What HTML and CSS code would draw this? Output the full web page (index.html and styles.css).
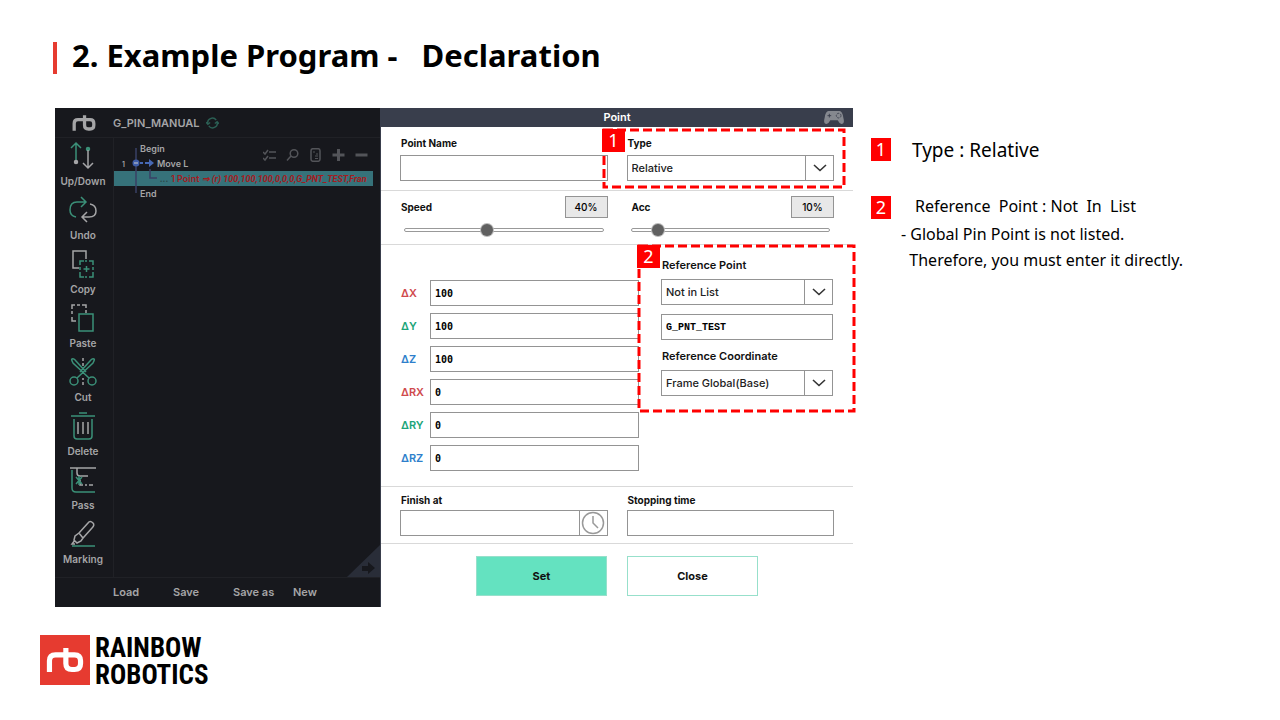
FILE: index.html
```html
<!DOCTYPE html>
<html lang="en">
<head>
<meta charset="utf-8">
<title>Example Program - Declaration</title>
<link rel="stylesheet" href="styles.css">
</head>
<body>
<svg class="defs" aria-hidden="true">
  <symbol id="rb" viewBox="0 0 44 32"><path d="M4 30V17Q4 10 11 10H33Q40 10 40 17V20Q40 27 33 27H30Q23 27 23 20V2" fill="none" stroke="currentColor" stroke-width="6"/></symbol>
  <symbol id="chev" viewBox="0 0 14 8"><path d="M1 1L7 6.500L13 1" fill="none" stroke="#333" stroke-width="1.600"/></symbol>
</svg>
<header class="title"><h1>2. Example Program -&nbsp;&nbsp; Declaration</h1></header>
<main class="content">
  <div class="app">
    <section class="editor">
      <div class="topbar">
        <svg class="brand"><use href="#rb"/></svg>
        <span class="file">G_PIN_MANUAL</span>
        <svg class="sync" viewBox="0 0 14 12"><path d="M2 7A5 5 0 0 1 11 3M12 5A5 5 0 0 1 3 9M0 5L2 7.500L4.500 5.500M9.500 6.500L12 4.500L14 7" /></svg>
      </div>
      <nav class="side">
        <button class="tool"><svg viewBox="0 0 30 30"><g class="g"><path d="M8 20V2M3 7L8 2L13 7"/><circle cx="20" cy="8" r="1.500" fill="#3b9078"/></g><g class="w"><path d="M20 9V27M15 22L20 27L25 22"/><circle cx="8" cy="21" r="1.500" fill="#a5a5a7"/></g></svg>Up/Down</button>
        <button class="tool"><svg viewBox="0 0 30 30"><path class="g" d="M8 22Q2 21 2 15Q2 7 9 7H18M13 2L18 7L13 12"/><path class="w" d="M22 9Q28 10 28 16Q28 22 21 22H14M19 17L14 22L19 27"/></svg>Undo</button>
        <button class="tool"><svg viewBox="0 0 30 30"><path class="w" d="M11 19H5V2H18V10"/><path class="g" d="M12 16V12H16M21 12H25V16M25 23V28H21M16 28H12V23M12 18V21M25 18V21M17 12H19M17 28H19M15.500 20H21.500M18.500 17V23"/></svg>Copy</button>
        <button class="tool"><svg viewBox="0 0 30 30"><path class="w" d="M4 6V2H7M9 2H12M14 2H18V5M4 8V11M4 14V18H8M18 7V10"/><path class="g" d="M11 11H25V28H11Z"/></svg>Paste</button>
        <button class="tool"><svg viewBox="0 0 30 30"><path class="w" d="M15 1V4M15 6V9M15 21V23M15 25V28"/><g class="g"><circle cx="6" cy="24" r="4"/><circle cx="24" cy="24" r="4"/><path d="M9 21L25 6Q27 2 26 2Q24 1 22 4L12 15M21 21L5 6Q3 2 4 2Q6 1 8 4L18 15"/></g></svg>Cut</button>
        <button class="tool"><svg viewBox="0 0 30 30"><path class="g" d="M11 2H19M3 5H27M6 8V25Q6 28 9 28H21Q24 28 24 25V8"/><path class="w" d="M10 11V23M15 11V23M20 11V23"/></svg>Delete</button>
        <button class="tool"><svg viewBox="0 0 30 30"><path class="w" d="M2 3H28M9 3V8Q9 11 12 11H20M12 15V20H15M17 20H19M21 20H25"/><path class="g" d="M4 5V23Q4 27 8 27H27M8 12L14 19M14 12L8 19M11 11V20"/></svg>Pass</button>
        <button class="tool"><svg viewBox="0 0 30 30"><path class="w" d="M11 14L20 4Q22 1 25 4Q27 6 24 9L15 19ZM11 14L7 17L6 21L9 24L13 22L15 19M7 21L4 25H7"/><path class="g" d="M4 27H27"/></svg>Marking</button>
      </nav>
      <div class="tree">
        <div class="treetools">
          <svg viewBox="0 0 13 12"><path d="M0 3L2 5L5 1M6 3H13M0 9L2 11L5 7M6 9H13"/></svg>
          <svg viewBox="0 0 13 12"><circle cx="8" cy="4.500" r="3.800"/><path d="M5 7L1 11.500"/></svg>
          <svg viewBox="0 0 13 14"><rect x="2" y="0.700" width="9" height="12.600" rx="2"/><path d="M4 4H6M7 6H9M6 8H9M6 10.500H9" stroke-width="1"/></svg>
          <svg viewBox="0 0 13 12" class="bold"><path d="M0.500 6H12.500M6.500 0V12"/></svg>
          <svg viewBox="0 0 13 12" class="bold"><path d="M0.500 6H12.500"/></svg>
        </div>
        <svg class="guide" viewBox="0 0 46 60"><path d="M22 7V52M36 28V37H43" fill="none" stroke="#3a4066" stroke-width="1.500"/><circle cx="22" cy="22" r="3.500" fill="#3e5da8"/><path d="M20 22H24" stroke="#ccc"/><path d="M26 22H29M31 22H36" stroke="#4769b5" stroke-width="2"/><path d="M35 18L40 22L35 26Z" fill="#4769b5"/></svg>
        <div class="node begin">Begin</div>
        <div class="node move"><span>1</span>Move L</div>
        <div class="node point"><i class="axis">...</i>1 Point <i class="args">⇒ (r) 100,100,100,0,0,0,G_PNT_TEST,Fran</i></div>
        <div class="node begin">End</div>
        <svg class="corner" viewBox="0 0 33 32"><path d="M33 0V32H0Z" fill="#292d38"/><path d="M15 21H21V17L28 23L21 29V26H15Z" fill="#17181d"/></svg>
      </div>
      <div class="files"><button>Load</button><button>Save</button><button>Save as</button><button>New</button></div>
    </section>
    <form class="panel">
      <div class="bar">Point
        <svg class="pad" viewBox="0 0 22 14"><path d="M5 0H17Q20 0 21 7Q23 14 19 14Q17 14 15 10H7Q5 14 3 14Q-1 14 1 7Q2 0 5 0Z" fill="#85888f"/><path d="M4 5H8M6 3V7" stroke="#393e4c"/><circle cx="16" cy="5" r="2.500" fill="none" stroke="#393e4c" stroke-dasharray="2 1"/></svg>
      </div>
      <div class="row names">
        <div class="field"><label for="pn">Point Name</label><input id="pn" type="text"></div>
        <div class="field"><label for="ty">Type</label><div class="pick"><select id="ty"><option>Relative</option></select><span><svg><use href="#chev"/></svg></span></div></div>
      </div>
      <div class="row rates">
        <div class="rate"><label for="sp">Speed</label><output>40%</output><input id="sp" type="range" value="41"></div>
        <div class="rate acc"><label for="ac">Acc</label><output>10%</output><input id="ac" type="range" value="11"></div>
      </div>
      <div class="row coords">
        <div class="axes">
          <label class="x" for="dx">ΔX</label><input id="dx" type="text" value="100">
          <label class="y" for="dy">ΔY</label><input id="dy" type="text" value="100">
          <label class="z" for="dz">ΔZ</label><input id="dz" type="text" value="100">
          <label class="x" for="rx">ΔRX</label><input id="rx" type="text" value="0">
          <label class="y" for="ry">ΔRY</label><input id="ry" type="text" value="0">
          <label class="z" for="rz">ΔRZ</label><input id="rz" type="text" value="0">
        </div>
        <div class="refs">
          <label for="rp">Reference Point</label>
          <div class="pick"><select id="rp"><option>Not in List</option></select><span><svg><use href="#chev"/></svg></span></div>
          <input type="text" class="pin" aria-label="Point" value="G_PNT_TEST">
          <label for="rc">Reference Coordinate</label>
          <div class="pick"><select id="rc"><option>Frame Global(Base)</option></select><span><svg><use href="#chev"/></svg></span></div>
        </div>
      </div>
      <div class="row times">
        <div class="field"><label for="fa">Finish at</label><div class="pick"><input id="fa" type="text"><span><svg class="clock" viewBox="0 0 24 24"><circle cx="12" cy="12" r="10.500"/><path d="M12 5V12L17 17"/></svg></span></div></div>
        <div class="field"><label for="st">Stopping time</label><input id="st" type="text"></div>
      </div>
      <div class="actions"><button type="button" class="set">Set</button><button type="button">Close</button></div>
      <div class="mark one"><svg><rect/></svg><b class="num">1</b></div>
      <div class="mark two"><svg><rect/></svg><b class="num">2</b></div>
    </form>
  </div>
  <aside class="notes">
    <div class="note"><b class="num">1</b><p class="lead">Type : Relative</p></div>
    <div class="note"><b class="num">2</b><p>Reference&nbsp; Point : Not&nbsp; In&nbsp; List</p></div>
    <p class="detail">- Global Pin Point is not listed.<br>&nbsp; Therefore, you must enter it directly.</p>
  </aside>
</main>
<footer class="logo">
  <div class="tile"><svg><use href="#rb"/></svg></div>
  <div class="name"><div>RAINBOW</div><div>ROBOTICS</div></div>
</footer>
</body>
</html>
```
FILE: styles.css
```css
* { box-sizing: border-box; }
body { margin: 0; background: #fff; color: #000; font-family: "Noto Sans", sans-serif; }
button, input, select { font: inherit; color: inherit; margin: 0; }
button { border: 0; background: none; padding: 0; }
p, h1 { margin: 0; }
.defs { position: absolute; width: 0; height: 0; }

.title { padding: 42px 53px 34px; }
.title h1 { border-left: 4px solid #e63b30; padding: 0 0 6px 15px; font-size: 31px; line-height: 26px; font-weight: 700; }

.content { display: grid; grid-template-columns: minmax(0, 798fr) minmax(0, 391fr); gap: 18px; padding: 0 18px 0 55px; }
.app { display: grid; grid-template-columns: 325fr 473fr; font-family: Inter, sans-serif; font-size: 11px; font-weight: 600; }

.editor { display: grid; grid-template: 30px 1fr 30px / 59px minmax(0, 1fr); background: #17181d; color: #a5a5a7; }
.topbar { grid-column: 1 / -1; display: flex; align-items: center; border-bottom: 1px solid #202126; }
.brand { width: 24px; height: 18px; margin: 0 17px; }
.sync { width: 13px; height: 12px; margin-left: 6px; fill: none; stroke: #2b5f54; stroke-width: 1.500; }
.side { border-right: 1px solid #202126; padding: 0 2px 7px 0; }
.tool { display: flex; flex-direction: column; align-items: center; width: 100%; height: 54px; padding-top: 3px; line-height: 20px; font-size: 10px; }
.tool svg { width: 30px; height: 30px; fill: none; stroke-width: 1.500; }
.g { stroke: #3b9078; }
.w { stroke: #a5a5a7; }
.tree { position: relative; padding: 3px 7px 0 0; font-size: 9px; line-height: 15px; }
.guide { position: absolute; left: 0; top: 3px; width: 46px; height: 60px; }
.node { white-space: nowrap; height: 15px; }
.begin { padding-left: 26px; }
.move span { display: inline-block; width: 43px; padding-left: 8px; font-size: 7px; }
.point { background: #36727a; color: #a51b20; padding-left: 46px; overflow: hidden; }
.args { font-family: Roboto, sans-serif; font-weight: 700; }
.axis { display: inline-block; width: 11px; color: #2c4a4a; }
.treetools { position: absolute; right: 12px; top: 10px; display: flex; gap: 10px; }
.treetools svg { width: 13px; height: 14px; fill: none; stroke: #535459; stroke-width: 1.500; }
.treetools .bold { stroke-width: 3; }
.corner { position: absolute; right: 0; bottom: 0; width: 33px; height: 32px; }
.files { grid-column: 1 / -1; display: grid; grid-template-columns: repeat(4, 60px); align-items: center; border-top: 1px solid #202126; padding: 0 0 1px 58px; }
.files button { text-align: left; }

.panel { position: relative; display: flex; flex-direction: column; background: #fff; border-left: 1px solid #393e4c; }
.bar { position: relative; height: 19px; line-height: 19px; background: #393e4c; color: #fff; text-align: center; }
.pad { position: absolute; right: 8px; top: 3px; width: 22px; height: 13px; }
.row { display: grid; grid-template-columns: 1fr 1fr; gap: 19px; padding: 0 19px; border-bottom: 1px solid #d9d9d9; }
.panel label { font-size: 10px; line-height: 14px; font-weight: 700; color: #111; padding-left: 1px; }
.field { display: flex; flex-direction: column; }
.names { padding-top: 9px; padding-bottom: 9px; }
.names .field { gap: 5px; }
input[type=text], .pick { width: 100%; height: 26px; border: 1px solid #949494; background: #fff; }
input[type=text] { padding: 0 4px; font: bold 10px/18px "DejaVu Sans Mono", monospace; }
input.pin[type=text] { font-family: "Liberation Mono", monospace; }
.pick { display: flex; }
.pick select, .pick input[type=text] { flex: 1; min-width: 0; height: 24px; border: 0; background: #fff; appearance: none; padding: 0 4px; font-size: 11px; font-weight: 500; color: #222; }
.pick span { width: 28px; border-left: 1px solid #949494; display: grid; place-items: center; }
.pick svg { width: 14px; height: 8px; }
.pick .clock { width: 24px; height: 24px; fill: none; stroke: #999; stroke-width: 1.500; }
.rates { padding-top: 5px; padding-bottom: 8px; }
.rate { display: grid; grid-template-columns: 1fr 43px; align-items: center; row-gap: 5px; }
.rate output { height: 22px; border: 1px solid #949494; background: #e8e8e8; text-align: center; line-height: 20px; font-size: 10px; font-weight: 500; }
.panel .acc label { padding-left: 5px; }
input[type=range] { grid-column: 1 / -1; margin: 0 4px; height: 13px; appearance: none; background: none; }
input[type=range]::-webkit-slider-runnable-track { height: 4px; border: 1px solid #999; border-radius: 2px; background: #fff; }
input[type=range]::-webkit-slider-thumb { appearance: none; width: 12px; height: 12px; margin-top: -5px; border-radius: 50%; background: #606060; box-shadow: 0 0 0 1px #bbb; }
.coords { grid-template-columns: 239fr 172fr; gap: 22px; padding: 13px 20px 15px 19px; }
.axes { display: grid; grid-template-columns: 30px 1fr; row-gap: 7px; align-items: center; padding-top: 22px; align-content: start; }
.panel .axes label { font-size: 11px; font-weight: 600; }
.panel .axes .x { color: #cf4a4d; }
.panel .axes .y { color: #1ca579; }
.panel .axes .z { color: #2e7fcb; }
.refs { display: flex; flex-direction: column; }
.panel .refs label { font-size: 11px; font-weight: 600; }
.refs .pick { margin-top: 7px; }
.refs .pin { margin: 9px 0; }
.times { padding-top: 6px; padding-bottom: 7px; }
.times .field { gap: 3px; }
.actions { flex: 1; display: flex; justify-content: center; align-items: center; gap: 20px; padding: 0 19px; }
.actions button { width: 131px; height: 40px; border: 1px solid #97e0cb; color: #111; font-weight: 700; }
.actions .set { background: #64e2c0; }

.num { display: block; flex: none; width: 20px; height: 23px; background: #f00; color: #fff; text-align: center; font: 400 18px/23px "Noto Sans", sans-serif; }
.mark { position: absolute; pointer-events: none; }
.mark svg { width: 100%; height: 100%; display: block; overflow: visible; }
.mark rect { width: 100%; height: 100%; fill: none; stroke: #f00; stroke-width: 3; stroke-dasharray: 9 4; }
.mark .num { position: absolute; left: -2px; top: -1px; width: 23px; }
.one { left: 223px; right: 9px; top: 22px; height: 57px; }
.two { left: 258px; right: -1px; top: 138px; height: 165px; }

.notes { padding-top: 30px; }
.note { display: flex; align-items: center; gap: 24px; margin-bottom: 35px; font-size: 16px; line-height: 20px; }
.note .lead { font-size: 19px; margin-left: -3px; }
.note:nth-child(2) { align-items: flex-start; margin-bottom: 2px; }
.detail { padding-left: 30px; font-size: 16px; line-height: 26px; }

.logo { display: flex; gap: 5px; padding: 28px 40px; }
.tile { width: 50px; height: 50px; background: #e63b30; color: #fff; display: grid; place-items: center; }
.tile svg { width: 38px; height: 28px; }
.name { font: bold 27px/27px "Roboto Condensed", Roboto, sans-serif; }
```
